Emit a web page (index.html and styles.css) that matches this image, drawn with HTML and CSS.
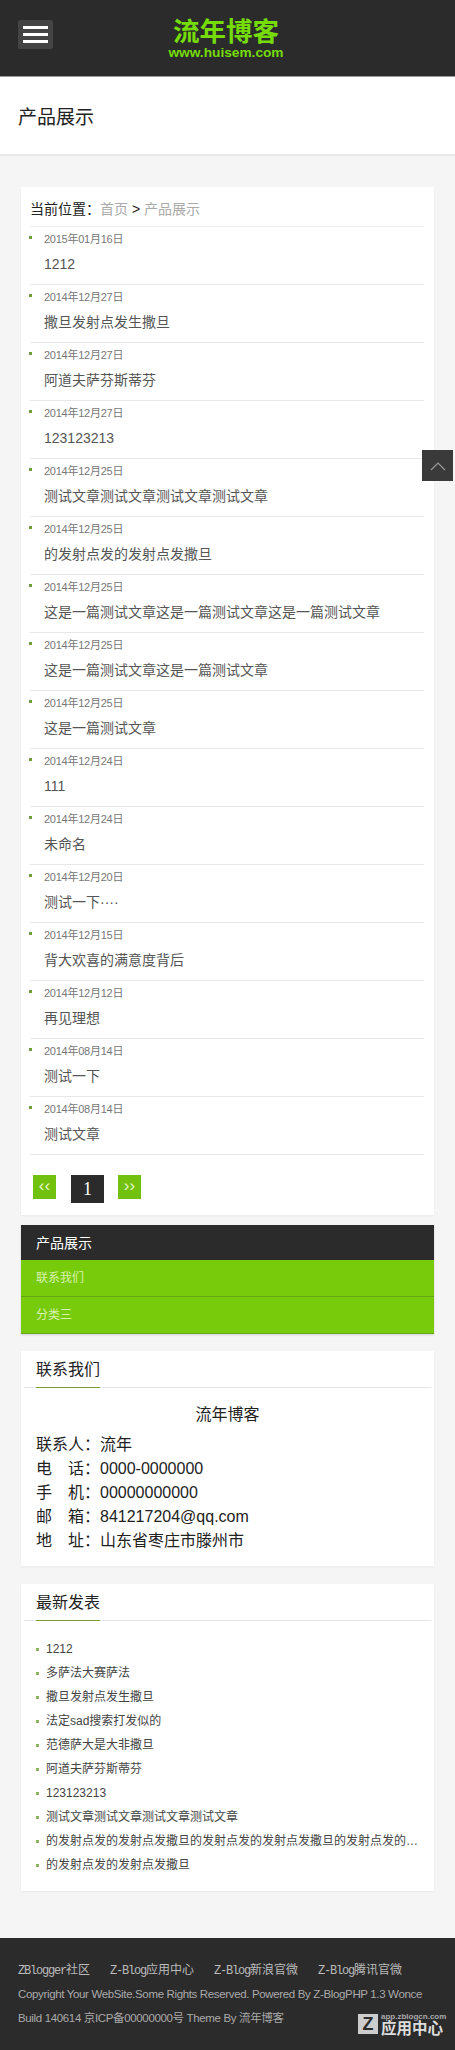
FILE: index.html
```html
<!DOCTYPE html>
<html lang="zh-CN">

<head>
    <meta charset="UTF-8">
    <meta name="viewport" content="width=device-width, initial-scale=1.0">
    <title>产品展示 - 流年博客</title>
    <link rel="stylesheet" href="styles.css">
</head>

<body>

    <header id="header">
        <div class="menu_btn"><span></span><span></span><span></span></div>
        <div class="logo">
            <div class="logo_name">流年博客</div>
            <div class="logo_url">www.huisem.com</div>
        </div>
    </header>

    <div id="page_title">产品展示</div>

    <div class="card main_card">
        <div class="crumb"><b>当前位置：</b><a>首页</a> <span>&gt;</span> <a>产品展示</a></div>
        <ul class="post_list">
            <li><time>2015年01月16日</time><a>1212</a></li>
            <li><time>2014年12月27日</time><a>撒旦发射点发生撒旦</a></li>
            <li><time>2014年12月27日</time><a>阿道夫萨芬斯蒂芬</a></li>
            <li><time>2014年12月27日</time><a>123123213</a></li>
            <li><time>2014年12月25日</time><a>测试文章测试文章测试文章测试文章</a></li>
            <li><time>2014年12月25日</time><a>的发射点发的发射点发撒旦</a></li>
            <li><time>2014年12月25日</time><a>这是一篇测试文章这是一篇测试文章这是一篇测试文章</a></li>
            <li><time>2014年12月25日</time><a>这是一篇测试文章这是一篇测试文章</a></li>
            <li><time>2014年12月25日</time><a>这是一篇测试文章</a></li>
            <li><time>2014年12月24日</time><a>111</a></li>
            <li><time>2014年12月24日</time><a>未命名</a></li>
            <li><time>2014年12月20日</time><a>测试一下····</a></li>
            <li><time>2014年12月15日</time><a>背大欢喜的满意度背后</a></li>
            <li><time>2014年12月12日</time><a>再见理想</a></li>
            <li><time>2014年08月14日</time><a>测试一下</a></li>
            <li><time>2014年08月14日</time><a>测试文章</a></li>
        </ul>
        <div class="pager">
            <a class="pager_arrow">‹‹</a>
            <a class="pager_now">1</a>
            <a class="pager_arrow">››</a>
        </div>
    </div>

    <nav class="side_nav">
        <a class="active">产品展示</a>
        <a>联系我们</a>
        <a>分类三</a>
    </nav>

    <div class="card side_card contact_card">
        <h3><span>联系我们</span></h3>
        <div class="contact">
            <p class="contact_name">流年博客</p>
            <p>联系人：流年</p>
            <p>电&emsp;话：0000-0000000</p>
            <p>手&emsp;机：00000000000</p>
            <p>邮&emsp;箱：841217204@qq.com</p>
            <p>地&emsp;址：山东省枣庄市滕州市</p>
        </div>
    </div>

    <div class="card side_card recent_card">
        <h3><span>最新发表</span></h3>
        <ul class="recent">
            <li>1212</li>
            <li>多萨法大赛萨法</li>
            <li>撒旦发射点发生撒旦</li>
            <li>法定sad搜索打发似的</li>
            <li>范德萨大是大非撒旦</li>
            <li>阿道夫萨芬斯蒂芬</li>
            <li>123123213</li>
            <li>测试文章测试文章测试文章测试文章</li>
            <li>的发射点发的发射点发撒旦的发射点发的发射点发撒旦的发射点发的发射点发撒旦</li>
            <li>的发射点发的发射点发撒旦</li>
        </ul>
    </div>

    <footer id="footer">
        <div class="foot_links">
            <a><span>ZBlogger</span>社区</a>
            <a><span>Z-Blog</span>应用中心</a>
            <a><span>Z-Blog</span>新浪官微</a>
            <a><span>Z-Blog</span>腾讯官微</a>
        </div>
        <p>Copyright Your WebSite.Some Rights Reserved. Powered By Z-BlogPHP 1.3 Wonce Build 140614 京ICP备00000000号 Theme By 流年博客</p>
    </footer>

    <div class="to_top">
        <svg width="16" height="10" viewBox="0 0 16 10"><path d="M1 9 L8 2 L15 9" fill="none" stroke="#9a9a9a" stroke-width="1.2"/></svg>
    </div>

    <div class="app_badge">
        <span class="app_z">Z</span>
        <div class="app_text">
            <small>app.zblogcn.com</small>
            <b>应用中心</b>
        </div>
    </div>

</body>

</html>
```

FILE: styles.css
```css
*{
    box-sizing:border-box;
}

body{
    margin: 0;
    height: 2050px;
    position: relative;
    overflow: hidden;
    background-color: #f5f5f5;
    font-family: "Liberation Sans", "Noto Sans CJK SC", sans-serif;
    font-size: 12px;
    color: #333;
}

ul{
    list-style: none;
    margin: 0;
    padding: 0;
}

p{
    margin: 0;
}

#header{
    height: 77px;
    background-color: #2b2b2b;
    border-bottom: 1px solid #999;
    padding: 20px 0 0 18px;
    display: flex;
}

.menu_btn{
    width: 35px;
    height: 29px;
    background-color: #444;
    border-radius: 2px;
    padding: 6px 5px;
    display: flex;
    flex-direction: column;
    justify-content: space-between;
}

.menu_btn span{
    display: block;
    height: 3px;
    background-color: #fff;
}

.logo{
    margin-left: 115px;
    margin-top: -1px;
    width: 116px;
    text-align: center;
    color: #76dc08;
    font-weight: bold;
}

.logo_name{
    font-size: 26.5px;
    line-height: 27px;
    height: 27px;
}

.logo_url{
    font-size: 13.7px;
    line-height: 14px;
    white-space: nowrap;
}

#page_title{
    height: 79px;
    background-color: #fff;
    border-bottom: 2px solid #e8e8e8;
    padding-left: 18px;
    font-size: 19px;
    line-height: 81px;
    color: #222;
}

.card{
    background-color: #fff;
    margin: 0 21px;
    box-shadow: 0 1px 2px rgba(0,0,0,0.05);
}

.main_card{
    margin-top: 31px;
    height: 1028px;
    padding: 0 10px 0 9px;
}

.crumb{
    height: 39px;
    padding: 11px 0 0 0;
    font-size: 14px;
    line-height: 22px;
    color: #222;
}

.crumb b{
    font-weight: normal;
}

.crumb a{
    color: #aaa;
}

.post_list{
    border-top: 1px solid #eee;
}

.post_list li{
    height: 58px;
    border-bottom: 1px solid #e8e8e8;
    padding: 3px 0 0 14px;
    position: relative;
}

.post_list li::before{
    content: "";
    position: absolute;
    left: -1px;
    top: 9px;
    width: 3px;
    height: 3px;
    background-color: #6f9d3a;
}

.post_list time{
    display: block;
    font-size: 11px;
    letter-spacing: -0.25px;
    line-height: 18px;
    color: #777;
}

.post_list a{
    display: block;
    font-size: 14px;
    line-height: 20px;
    margin-top: 6px;
    color: #555;
}

.pager{
    display: flex;
    align-items: flex-start;
    margin-top: 20px;
    padding-left: 3px;
}

.pager a{
    display: block;
    text-align: center;
}

.pager_arrow{
    width: 23px;
    height: 24px;
    background-color: #72c10e;
    color: #e6f7c8;
    font-size: 17px;
    line-height: 21px;
}

.pager_now{
    width: 33px;
    height: 28px;
    margin: 0 14px 0 15px;
    background-color: #2b2b2b;
    color: #fff;
    font-family: "Liberation Serif", serif;
    font-size: 18px;
    line-height: 28px;
}

.side_nav{
    margin: 10px 21px 0;
    box-shadow: 0 1px 2px rgba(0,0,0,0.15);
}

.side_nav a{
    display: block;
    height: 37px;
    padding-left: 15px;
    background-color: #78cb0a;
    border-bottom: 1px solid #63a814;
    color: #d8f2b0;
    font-size: 12px;
    line-height: 36px;
}

.side_nav a.active{
    height: 35px;
    background-color: #2b2b2b;
    border-bottom: 0;
    color: #fff;
    font-size: 14px;
    line-height: 36px;
}

.side_card{
    padding: 0 3px;
}

.contact_card{
    margin-top: 17px;
    height: 215px;
}

.recent_card{
    margin-top: 18px;
    height: 307px;
}

.side_card h3{
    margin: 0;
    height: 37px;
    padding-left: 12px;
    border-bottom: 1px solid #e5e5e5;
    font-weight: normal;
    font-size: 16px;
    line-height: 37px;
    color: #222;
}

.side_card h3 span{
    display: inline-block;
    height: 37px;
    border-bottom: 1px solid #7d9a3f;
}

.contact{
    padding: 15px 12px 0;
    font-size: 16px;
    line-height: 24px;
    color: #222;
}

.contact_name{
    text-align: center;
    margin-bottom: 6px;
}

.recent{
    padding: 16px 10px 0 12px;
}

.recent li{
    position: relative;
    height: 24px;
    padding-left: 10px;
    line-height: 24px;
    font-size: 12px;
    color: #444;
    white-space: nowrap;
    overflow: hidden;
    text-overflow: ellipsis;
}

.recent li::before{
    content: "";
    position: absolute;
    left: 0;
    top: 11px;
    width: 3px;
    height: 3px;
    background-color: #8fb35a;
}

#footer{
    position: absolute;
    left: 0;
    right: 0;
    top: 1938px;
    height: 112px;
    background-color: #2b2b2b;
    padding: 20px 30px 0 18px;
    color: #aaa;
    font-size: 11.5px;
    letter-spacing: -0.35px;
    line-height: 24px;
}

.foot_links{
    display: flex;
    gap: 20px;
    height: 24px;
    font-size: 12px;
    letter-spacing: 0;
    color: #bbb;
}

.foot_links span{
    font-family: "Liberation Mono", monospace;
    letter-spacing: -1.2px;
}

.to_top{
    position: absolute;
    left: 422px;
    top: 450px;
    width: 31px;
    height: 31px;
    background-color: #3a3a3a;
    display: flex;
    align-items: center;
    justify-content: center;
}

.app_badge{
    position: absolute;
    left: 358px;
    top: 2013px;
    display: flex;
    gap: 3px;
    color: #ddd;
}

.app_z{
    width: 20px;
    height: 20px;
    margin-top: 1px;
    background-color: #ccc;
    color: #2b2b2b;
    font-weight: bold;
    font-size: 18px;
    line-height: 20px;
    text-align: center;
}

.app_text small{
    display: block;
    font-size: 8px;
    line-height: 8px;
    font-weight: bold;
    color: #aaa;
    text-align: right;
}

.app_text b{
    display: block;
    font-size: 15.5px;
    line-height: 15px;
    white-space: nowrap;
}
```
